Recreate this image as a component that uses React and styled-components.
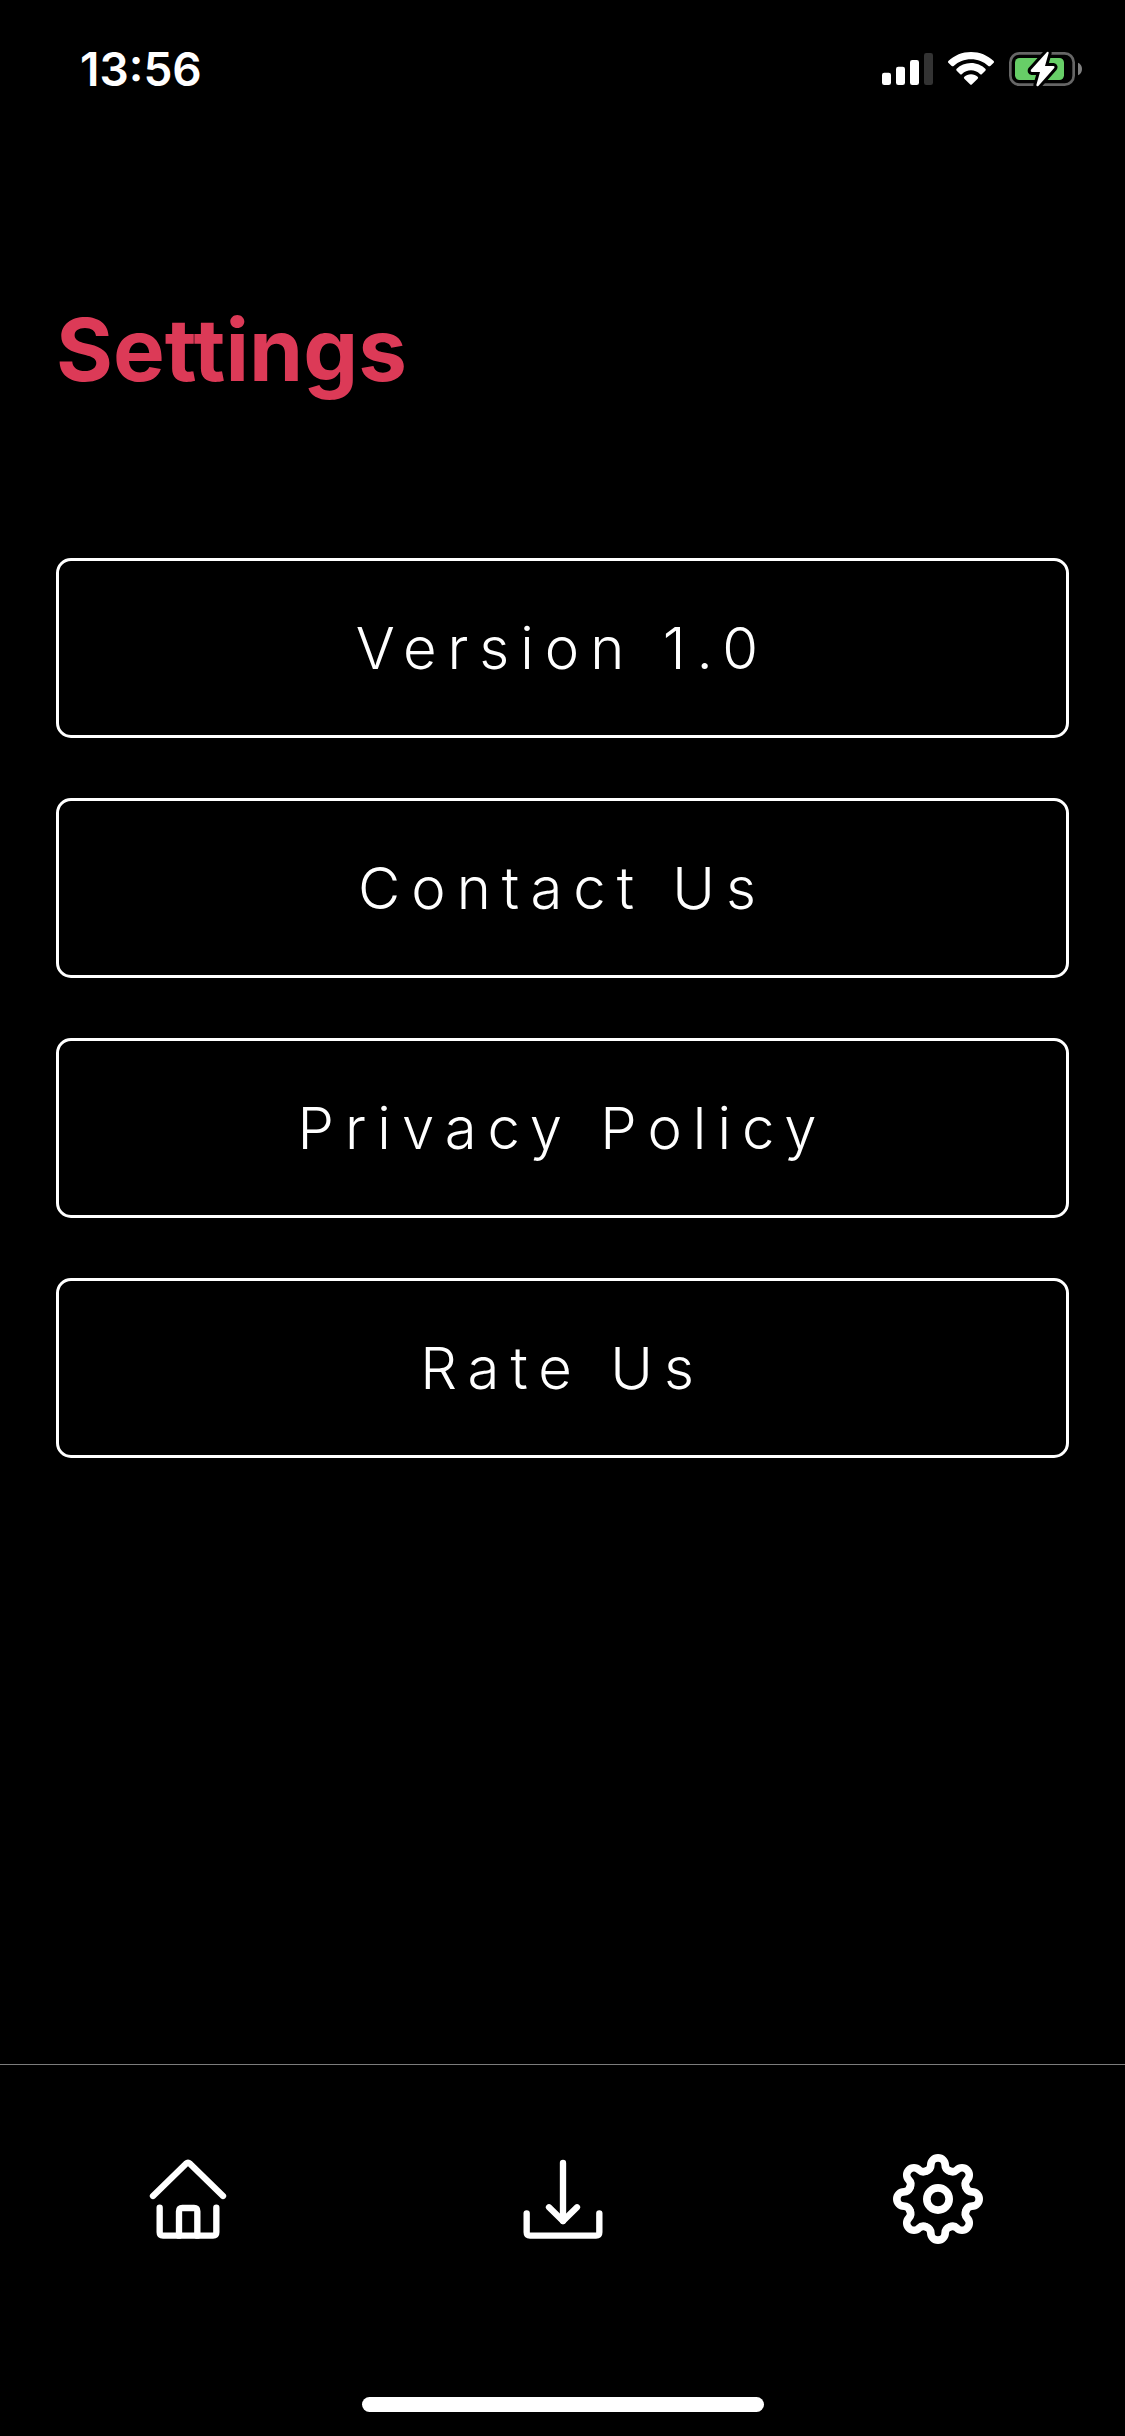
import React from "react";
import styled, { createGlobalStyle } from "styled-components";

const GlobalStyle = createGlobalStyle`
  *, *::before, *::after { box-sizing: border-box; }
  body { margin: 0; background: #000; }
`;

const Screen = styled.div`
  min-height: 100vh;
  display: flex;
  flex-direction: column;
  background: #000;
  color: #fff;
  font-family: Inter, "Liberation Sans", sans-serif;
`;

const StatusBar = styled.header`
  height: 138px;
  display: flex;
  justify-content: space-between;
  align-items: center;
  padding: 0 43px 0 80px;
`;

const Clock = styled.time`
  font-size: 46px;
  line-height: 48px;
  font-weight: 600;
`;

const StatusIcons = styled.div`
  display: flex;
  gap: 15px;
`;

const Glyph = styled.svg`
  display: block;
  width: ${(p) => p.$width}px;
  height: ${(p) => p.$height}px;
`;

const Main = styled.main`
  flex: 1;
  padding: 158px 56px 60px;
`;

const Title = styled.h1`
  margin: 0 0 154px;
  font-size: 87px;
  line-height: 108px;
  font-weight: 700;
  color: #dc3a57;
`;

const OptionList = styled.div`
  display: grid;
  gap: 60px;
`;

const OptionButton = styled.button`
  height: 180px;
  padding: 0;
  border: 3px solid #fff;
  border-radius: 15px;
  background: transparent;
  color: inherit;
  font-family: inherit;
  font-size: 58px;
  font-weight: 300;
  line-height: 72px;
  letter-spacing: 11px;
  cursor: pointer;
`;

const TabBar = styled.nav`
  height: 372px;
  display: flex;
  flex-direction: column;
  justify-content: space-between;
  align-items: center;
  padding: 87px 0 24px;
  border-top: 1px solid #7c7c7c;
`;

const Tabs = styled.div`
  width: 100%;
  display: grid;
  grid-template-columns: repeat(3, 1fr);
`;

const Tab = styled.button`
  display: flex;
  justify-content: center;
  padding: 0;
  border: 0;
  background: transparent;
  color: inherit;
  cursor: pointer;
`;

const HomeIndicator = styled.div`
  width: 402px;
  height: 15px;
  border-radius: 8px;
  background: #fff;
`;

const SignalIcon = () => (
  <Glyph $width={51} $height={38} viewBox="66 60 153 114" aria-hidden="true">
    <g fill="#fff">
      <rect x="66" y="128" width="27" height="37" rx="7" />
      <rect x="108" y="110" width="27" height="55" rx="7" />
      <rect x="150" y="90" width="27" height="75" rx="7" />
      <rect x="192" y="69" width="27" height="96" rx="7" fill="#333" />
    </g>
  </Glyph>
);

const WifiIcon = () => (
  <Glyph $width={46} $height={38} viewBox="264 60 138 114" aria-hidden="true">
    <g fill="#fff">
      <path d="M333 66 C359 66 383 76 401 93 Q403 96 401 98 L391 108 Q388 110 385 108 C371 95 353 88 333 88 C313 88 295 95 281 108 Q278 110 275 108 L265 98 Q263 96 265 93 C283 76 307 66 333 66 Z" />
      <path d="M333 99 C350 99 365 106 376 116 Q379 119 376 122 L366 132 Q363 135 360 132 C352 125 343 121 333 121 C323 121 314 125 306 132 Q303 135 300 132 L290 122 Q287 119 290 116 C301 106 316 99 333 99 Z" />
      <path d="M333 133 C341 133 348 136 353 140 Q356 143 353 146 L336 163 Q333 166 330 163 L313 146 Q310 143 313 140 C318 136 325 133 333 133 Z" />
    </g>
  </Glyph>
);

const BatteryIcon = () => (
  <Glyph $width={73} $height={38} viewBox="447 60 219 114" aria-hidden="true">
    <rect x="451" y="70" width="190" height="94" rx="27" fill="none" stroke="#666" strokeWidth="8" />
    <path d="M654 98 C670 104 670 130 654 136 Z" fill="#808080" />
    <rect x="465" y="84" width="147" height="66" rx="14" fill="#67ce67" />
    <path
      d="M561 66 L513 119 Q510 125 516 126 H540 L529 165 Q530 171 535 168 L582 115 Q586 109 580 108 H555 L566 69 Q566 63 561 66 Z"
      fill="#fff"
      stroke="#000"
      strokeWidth="18"
      strokeLinejoin="round"
      paintOrder="stroke"
    />
  </Glyph>
);

const HomeIcon = () => (
  <Glyph $width={96} $height={96} viewBox="30 66 288 288" aria-hidden="true">
    <g fill="none" stroke="#fff" strokeWidth="19" strokeLinecap="round" strokeLinejoin="round">
      <path d="M69 198 L168 101 Q174 96 180 101 L279 198" />
      <path d="M89 233 V307 Q89 317 99 317 H249 Q259 317 259 307 V233" />
      <path d="M147 317 V244 Q147 234 157 234 H192 Q202 234 202 244 V317" />
    </g>
  </Glyph>
);

const DownloadIcon = () => (
  <Glyph $width={96} $height={96} viewBox="45 66 288 288" aria-hidden="true">
    <g fill="none" stroke="#fff" strokeWidth="19" strokeLinecap="round" strokeLinejoin="round">
      <path d="M189 99 V273" />
      <path d="M147 232 L189 273 L231 232" />
      <path d="M80 250 V307 Q80 317 90 317 H288 Q298 317 298 307 V250" />
    </g>
  </Glyph>
);

const GEAR_TEETH = [0, 45, 90, 135, 180, 225, 270, 315];

const GearIcon = () => (
  <Glyph $width={96} $height={96} viewBox="30 66 288 288" aria-hidden="true">
    <g transform="translate(174 207)" fill="none" stroke="#fff" strokeWidth="23" strokeLinecap="round">
      <circle r="33.5" />
      {GEAR_TEETH.map((angle) => (
        <path
          key={angle}
          transform={`rotate(${angle})`}
          d="M-34.8 -84 C-27 -87 -21.5 -94 -21.5 -102 A21.5 21.5 0 0 1 21.5 -102 C21.5 -94 27 -87 34.8 -84"
        />
      ))}
    </g>
  </Glyph>
);

const OPTIONS = ["Version 1.0", "Contact Us", "Privacy Policy", "Rate Us"];

const TABS = [
  { label: "Home", Icon: HomeIcon },
  { label: "Downloads", Icon: DownloadIcon },
  { label: "Settings", Icon: GearIcon },
];

export default function App() {
  return (
    <Screen>
      <GlobalStyle />
      <StatusBar>
        <Clock>13:56</Clock>
        <StatusIcons>
          <SignalIcon />
          <WifiIcon />
          <BatteryIcon />
        </StatusIcons>
      </StatusBar>
      <Main>
        <Title>Settings</Title>
        <OptionList>
          {OPTIONS.map((label) => (
            <OptionButton key={label} type="button">{label}</OptionButton>
          ))}
        </OptionList>
      </Main>
      <TabBar>
        <Tabs>
          {TABS.map(({ label, Icon }) => (
            <Tab key={label} type="button" aria-label={label}>
              <Icon />
            </Tab>
          ))}
        </Tabs>
        <HomeIndicator />
      </TabBar>
    </Screen>
  );
}
